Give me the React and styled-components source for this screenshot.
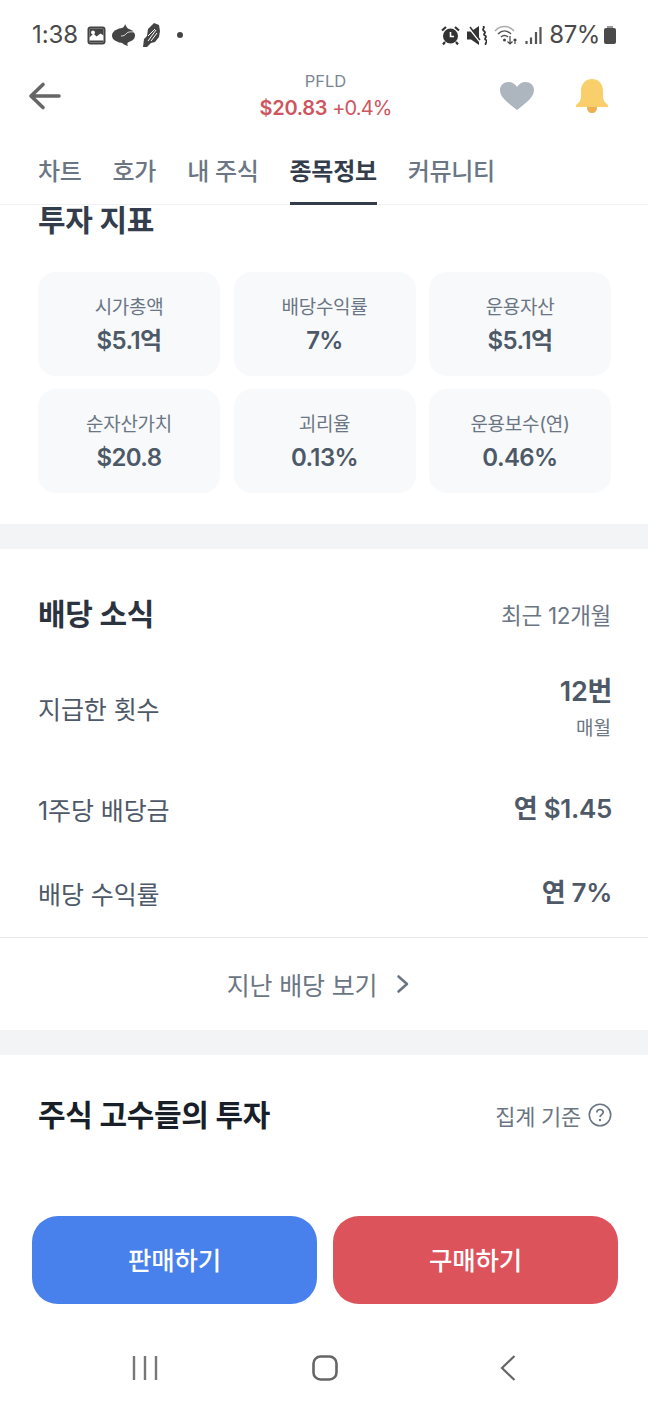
import React from "react";
import styled, { createGlobalStyle } from "styled-components";

const Global = createGlobalStyle`
  html, body { margin: 0; padding: 0; background: #fff; }
  * { box-sizing: border-box; }
  body { font-family: Inter, "Noto Sans CJK KR", sans-serif; }
`;

const Page = styled.div`
  width: 648px; height: 1404px; display: flex; flex-direction: column;
  overflow: hidden; background: #fff;
`;
const StatusBar = styled.div`
  height: 70px; flex: none; padding: 0 32px; display: flex; align-items: center;
  justify-content: space-between; color: #4a4a4a;
`;
const StatusGroup = styled.div`display: flex; align-items: center; gap: ${p => p.$gap || 4}px;`;
const StatusText = styled.span`font-size: 24px; font-weight: 400; letter-spacing: ${p => p.$ls || -0.1}px; line-height: 1;`;
const Header = styled.div`
  height: 54px; flex: none; padding: 0 38px 2px 28px; display: flex; align-items: center; justify-content: space-between;
`;
const PriceBlock = styled.div`
  display: flex; flex-direction: column; align-items: center; margin-left: 90px; margin-bottom: 2px;
`;
const Ticker = styled.div`font-size: 16.5px; color: #7b8694; line-height: 22px;`;
const Price = styled.div`color: #cf5560; font-size: 20px; line-height: 26px; margin-top: 3px; font-weight: 600; letter-spacing: -0.3px;`;
const Change = styled.span`font-weight: 400; margin-left: 5px; letter-spacing: -0.9px;`;
const HeaderIcons = styled.div`display: flex; align-items: center; gap: 40px; margin-right: 1px;`;
const Tabs = styled.div`
  height: 81px; flex: none; display: flex; gap: 31px; padding: 0 38px; border-bottom: 1px solid #eff1f3;
`;
const Tab = styled.div`
  height: 81px; display: flex; align-items: center; font-size: 24px; letter-spacing: -0.3px; padding-top: 13px;
  font-weight: ${p => (p.$active ? 700 : 500)};
  color: ${p => (p.$active ? "#333d4b" : "#6b7684")};
  border-bottom: ${p => (p.$active ? "3px solid #333d4b" : "3px solid transparent")};
`;
const Content = styled.div`flex: 1; min-height: 0;`;
const Section = styled.section`padding: 0 37px 0 38px;`;
const Title = styled.h2`
  margin: 0; font-size: 30px; font-weight: 700; letter-spacing: -0.3px; color: ${p => p.$color || "#333d4b"}; line-height: 30px;
`;
const Grid = styled.div`
  display: grid; grid-template-columns: repeat(3, 1fr); gap: 13px 13.5px; margin-top: 37px; padding-bottom: 31px;
`;
const Card = styled.div`
  height: 104px; background: #f8f9fb; border-radius: 18px; display: flex; flex-direction: column;
  align-items: center; justify-content: center; padding-top: 2px;
`;
const CardLabel = styled.div`font-size: 19px; line-height: 30px; color: #6b7684; letter-spacing: -0.3px;`;
const CardValue = styled.div`
  font-size: 24px; line-height: 32px; margin-top: 2px; font-weight: 600; color: #4e5968; letter-spacing: -0.6px;
`;
const Band = styled.div`height: 25px; background: #f2f4f6;`;
const TitleRow = styled.div`
  display: flex; align-items: center; justify-content: space-between; height: 30px; margin-top: ${p => p.$mt}px;
`;
const Note = styled.div`font-size: 22.5px; color: #6b7684; letter-spacing: -0.3px; display: flex; align-items: center; gap: 7px;`;
const HelpNote = styled(Note)`font-size: 22px; margin-right: -1px;`;
const Rows = styled.div`display: flex; flex-direction: column; padding: 39px 0 14px;`;
const Row = styled.div`
  display: flex; justify-content: space-between; align-items: center; height: ${p => p.$h}px; margin-top: ${p => p.$mt || 0}px;
`;
const RowLabel = styled.div`font-size: 25px; color: #4e5968; letter-spacing: -0.1px;`;
const RowValueBlock = styled.div`display: flex; flex-direction: column; align-items: flex-end; padding-top: 8px;`;
const RowValue = styled.div`
  font-size: 26px; font-weight: 600; color: #4e5968; letter-spacing: -0.3px; line-height: 34px; margin-right: -1px;
`;
const CountValue = styled(RowValue)`font-size: 27px;`;
const RowSub = styled.div`font-size: 19px; color: #6b7684; line-height: 40px;`;
const MoreRow = styled.div`
  height: 93px; border-top: 1px solid #e8ebed; display: flex; align-items: center; justify-content: center; gap: 19px;
  padding-right: 11px; font-size: 25px; color: #6b7684; letter-spacing: -0.2px;
`;
const Footer = styled.div`display: flex; gap: 16px; padding: 0 30px 0 32px; flex: none;`;
const ActionButton = styled.button`
  flex: 1; height: 88px; border: 0; border-radius: 26px; color: #fff; font: inherit;
  font-size: 25.5px; font-weight: 500; letter-spacing: -0.2px; padding-bottom: 5px; background: ${p => p.$bg};
`;
const NavBar = styled.div`
  height: 100px; flex: none; display: grid; grid-template-columns: 180px 180px 186px; align-items: center; justify-items: center;
  padding: 28px 0 0 55px;
`;
const NavSlot = styled.div`display: flex;`;

const cells = [
  ["시가총액", "$5.1억"], ["배당수익률", "7%"], ["운용자산", "$5.1억"],
  ["순자산가치", "$20.8"], ["괴리율", "0.13%"], ["운용보수(연)", "0.46%"],
];

const Svg = ({ w, h, children }) => <svg width={w} height={h} viewBox={`0 0 ${w} ${h}`} fill="none">{children}</svg>;

export default function App() {
  return (
    <Page>
      <Global />
      <StatusBar>
        <StatusGroup $gap={9}>
          <StatusText>1:38</StatusText>
          <StatusGroup $gap={6}>
            <Svg w={19} h={19}>
              <rect x="0.500" y="0.500" width="18" height="18" rx="3" fill="#444" />
              <rect x="2.500" y="2.500" width="14" height="14" rx="1" fill="#fff" />
              <path d="M2.500 2.500h14v7l-3-2-4 3-3-3-4 4z" fill="#444" />
              <circle cx="6" cy="6.500" r="2" fill="#fff" />
              <rect x="2.500" y="14.500" width="14" height="2" fill="#444" />
            </Svg>
            <Svg w={24} h={22}>
              <ellipse cx="11.500" cy="11.500" rx="11.500" ry="7.500" fill="#444" />
              <path d="M8 5c3-1 5-3 5-5 1 2 2 4 4 6z" fill="#444" />
              <path d="M9 17c2 1 5 1 8 0-2 2-2 3-1 5-3-1-6-2-7-5z" fill="#444" />
              <path d="M24 8c-4 0-8-1-10 2-1 1-2 2-5 2" stroke="#fff" strokeWidth="0.800" />
            </Svg>
            <Svg w={19} h={24}>
              <path d="M12 0l5 2 1 6-1 6-4 5-4 1-4 4H1l1-8 3-3 1-7z" fill="#444" />
              <path d="M6 18l8-11M9 18l6-8M6 13l7-7" stroke="#fff" strokeWidth="1" />
            </Svg>
          </StatusGroup>
          <Svg w={24} h={8}><circle cx="10" cy="4" r="3" fill="#444" /></Svg>
        </StatusGroup>
        <StatusGroup $gap={7}>
          <Svg w={19} h={19}>
            <circle cx="9.500" cy="10" r="7.500" fill="#333" />
            <path d="M9.500 6v4.500H13" stroke="#fff" strokeWidth="1.600" />
            <path d="M1 4.500l4-3.500M18 4.500L14 1M4 16l-2 2.500M15 16l2 2.500" stroke="#333" strokeWidth="2.200" />
          </Svg>
          <Svg w={20} h={19}>
            <path d="M0 5.500h4L12 0v19l-8-5.500H0z" fill="#333" />
            <path d="M1 1l12 15" stroke="#fff" strokeWidth="1.500" />
            <path d="M3 1l10 13" stroke="#333" strokeWidth="1.500" />
            <path d="M16 0c3 2-2 3 1 5s-2 3 1 4.500-2 3 1 4.500-2 3 0 5" stroke="#333" strokeWidth="1.800" />
          </Svg>
          <Svg w={24} h={20}>
            <path d="M1 6c5-6 14-6 19 0" stroke="#aaa" strokeWidth="1.500" />
            <path d="M4 9c4-4 9-4 13 0M7 12c2-2 5-2 7 0" stroke="#555" strokeWidth="1.500" />
            <circle cx="10.500" cy="15" r="1.500" fill="#444" />
            <path d="M16 11v8M13.500 16.500l2.500 2.500 2.500-2.500M21 19v-5M19.500 15.500l1.500-1.500 1.500 1.500" stroke="#444" strokeWidth="1.200" />
          </Svg>
          <Svg w={17} h={18}>
            <path d="M1.500 15v3M6 11.500V18M11 6v12M15.500 1v17" stroke="#555" strokeWidth="2.200" />
          </Svg>
          <StatusGroup $gap={4}>
            <StatusText $ls={-0.4}>87%</StatusText>
            <Svg w={12} h={18}>
              <rect x="3" y="0" width="6" height="3" fill="#999" />
              <rect x="0" y="2" width="12" height="16" rx="2" fill="#4a4a4a" />
            </Svg>
          </StatusGroup>
        </StatusGroup>
      </StatusBar>
      <Header>
        <Svg w={34} h={30}>
          <path d="M31 15H3M15 3.500L3 15l12 11.500" stroke="#666" strokeWidth="3.600" strokeLinecap="round" strokeLinejoin="round" />
        </Svg>
        <PriceBlock>
          <Ticker>PFLD</Ticker>
          <Price>$20.83<Change>+0.4%</Change></Price>
        </PriceBlock>
        <HeaderIcons>
          <Svg w={36} h={30}>
            <path d="M18 29C8 21 1 16 1 9 1 4 5 1 9.500 1 13 1 16.500 3 18 6 19.500 3 23 1 26.500 1 31 1 35 4 35 9c0 7-7 12-17 20z" fill="#adb5bf" />
          </Svg>
          <Svg w={34} h={36}>
            <path d="M12 29h10c0 4-2 6-5 6s-5-2-5-6z" fill="#eeb054" />
            <path d="M17 1C10 1 6 6 6 13v6c0 3-2 6-5 8v2h32v-2c-3-2-5-5-5-8v-6c0-7-4-12-11-12z" fill="#f9cf6b" />
          </Svg>
        </HeaderIcons>
      </Header>
      <Tabs>
        <Tab>차트</Tab>
        <Tab>호가</Tab>
        <Tab>내 주식</Tab>
        <Tab $active>종목정보</Tab>
        <Tab>커뮤니티</Tab>
      </Tabs>
      <Content>
        <Section>
          <Title>투자 지표</Title>
          <Grid>
            {cells.map(([l, v]) => (
              <Card key={l}>
                <CardLabel>{l}</CardLabel>
                <CardValue>{v}</CardValue>
              </Card>
            ))}
          </Grid>
        </Section>
        <Band />
        <Section>
          <TitleRow $mt={50}>
            <Title $color="#2b333f">배당 소식</Title>
            <Note>최근 12개월</Note>
          </TitleRow>
          <Rows>
            <Row $h={80}>
              <RowLabel>지급한 횟수</RowLabel>
              <RowValueBlock>
                <CountValue>12번</CountValue>
                <RowSub>매월</RowSub>
              </RowValueBlock>
            </Row>
            <Row $h={60} $mt={31}>
              <RowLabel>1주당 배당금</RowLabel>
              <RowValue>연 $1.45</RowValue>
            </Row>
            <Row $h={60} $mt={24}>
              <RowLabel>배당 수익률</RowLabel>
              <RowValue>연 7%</RowValue>
            </Row>
          </Rows>
        </Section>
        <MoreRow>
          지난 배당 보기
          <Svg w={14} h={20}>
            <path d="M2.500 2.500L11 10l-8.500 7.500" stroke="#6b7684" strokeWidth="2.600" strokeLinecap="round" strokeLinejoin="round" />
          </Svg>
        </MoreRow>
        <Band />
        <Section>
          <TitleRow $mt={45}>
            <Title $color="#191f28">주식 고수들의 투자</Title>
            <HelpNote>
              집계 기준
              <Svg w={24} h={24}>
                <circle cx="12" cy="12" r="10.700" stroke="#6b7684" strokeWidth="1.600" />
                <path d="M8.800 9.500c0-2 1.500-3 3.200-3s3.200 1 3.200 2.800c0 2.200-3.200 2.400-3.200 4.700" stroke="#6b7684" strokeWidth="1.700" />
                <circle cx="12" cy="17" r="1.200" fill="#6b7684" />
              </Svg>
            </HelpNote>
          </TitleRow>
        </Section>
      </Content>
      <Footer>
        <ActionButton $bg="#4880ec">판매하기</ActionButton>
        <ActionButton $bg="#dd535b">구매하기</ActionButton>
      </Footer>
      <NavBar>
        <NavSlot>
          <Svg w={26} h={24}>
            <path d="M2 0v24M13 0v24M24 0v24" stroke="#777" strokeWidth="2.400" />
          </Svg>
        </NavSlot>
        <NavSlot>
          <Svg w={26} h={26}>
            <rect x="1.500" y="1.500" width="23" height="23" rx="7" stroke="#666" strokeWidth="2.600" />
          </Svg>
        </NavSlot>
        <NavSlot>
          <Svg w={16} h={26}>
            <path d="M14.500 1L2 13l12.500 12" stroke="#666" strokeWidth="2.200" />
          </Svg>
        </NavSlot>
      </NavBar>
    </Page>
  );
}
